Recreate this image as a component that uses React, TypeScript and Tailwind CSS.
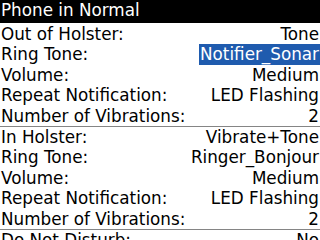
const sections = [
  [
    ["Out of Holster:", "Tone"],
    ["Ring Tone:", "Notifier_Sonar"],
    ["Volume:", "Medium"],
    ["Repeat Notification:", "LED Flashing"],
    ["Number of Vibrations:", "2"],
  ],
  [
    ["In Holster:", "Vibrate+Tone"],
    ["Ring Tone:", "Ringer_Bonjour"],
    ["Volume:", "Medium"],
    ["Repeat Notification:", "LED Flashing"],
    ["Number of Vibrations:", "2"],
  ],
  [["Do Not Disturb:", "No"]],
];

export default function App() {
  return (
    <div
      className="w-[320px] h-[240px] overflow-hidden bg-white text-black text-[16.8px] leading-[20.4px]"
      style={{ fontFamily: '"DejaVu Sans", sans-serif' }}
    >
      <div className="h-[23px] bg-black text-white pl-px leading-[21px]">Phone in Normal</div>
      <div className="pt-px">
        {sections.map((rows, si) => (
          <div key={si} className="border-b border-[#858585]">
            {rows.map(([label, value], ri) => (
              <div key={ri} className="flex justify-between h-[20.4px] pl-px">
                <span>{label}</span>
                <span
                  className={
                    si === 0 && ri === 1 ? "bg-[#1f5bae] text-white pl-px pr-px" : "pr-px"
                  }
                >
                  {value}
                </span>
              </div>
            ))}
          </div>
        ))}
      </div>
    </div>
  );
}
